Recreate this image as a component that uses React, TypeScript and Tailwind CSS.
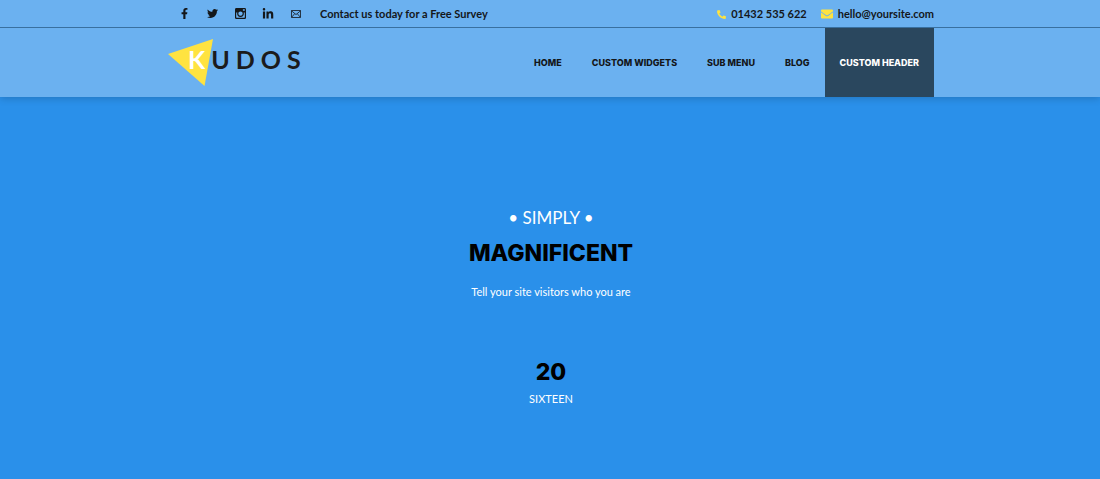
import { FaFacebookF, FaTwitter, FaLinkedinIn, FaPhone, FaEnvelope } from "react-icons/fa";

function CameraIcon() {
  return (
    <svg viewBox="0 0 12 12" className="size-[11px]" aria-hidden="true">
      <path
        fill="currentColor"
        fillRule="evenodd"
        d="M1.5 0h9A1.5 1.5 0 0 1 12 1.5v9a1.5 1.5 0 0 1-1.5 1.5h-9A1.5 1.5 0 0 1 0 10.5v-9A1.5 1.5 0 0 1 1.5 0ZM8.6 1.3v1.8h2.1V1.3ZM1.3 5v5.2q0 .5.5.5h8.4q.5 0 .5-.5V5H9.5a3.7 3.7 0 1 1-7 0ZM6 3.7a2.4 2.4 0 1 0 0 4.8a2.4 2.4 0 0 0 0-4.8Z"
      />
    </svg>
  );
}

function MailOutlineIcon() {
  return (
    <svg viewBox="0 0 10 8" className="h-2 w-[10px]" fill="none" stroke="currentColor" aria-hidden="true">
      <path d="M.5 .5h9v7h-9ZM.5 .8 5 4.6 9.5 .8M.7 7.2 3.7 3.7M9.3 7.2 6.3 3.7" strokeWidth="0.8" />
    </svg>
  );
}

const socials = [
  { label: "Facebook", icon: <FaFacebookF className="size-[11px]" /> },
  { label: "Twitter", icon: <FaTwitter className="size-[11px]" /> },
  { label: "Instagram", icon: <CameraIcon /> },
  { label: "LinkedIn", icon: <FaLinkedinIn className="size-3" /> },
  { label: "Email", icon: <MailOutlineIcon /> },
];

const menu = ["HOME", "CUSTOM WIDGETS", "SUB MENU", "BLOG"];

function Logo() {
  return (
    <a href="#" aria-label="KUDOS" className="relative ml-0.5 flex h-12 items-start pt-2 pl-5 text-[25px] leading-none font-bold text-[#1b1b1d]">
      <svg viewBox="0 0 46 48" className="absolute top-0 left-0 h-12 w-[46px]" aria-hidden="true">
        <path d="M0 15 45 0 36.5 47Z" fill="#ffe340" />
      </svg>
      <span className="relative flex gap-[6px]">
        <span className="text-white">K</span>
        <span>U</span>
        <span>D</span>
        <span>O</span>
        <span>S</span>
      </span>
    </a>
  );
}

export default function App() {
  return (
    <div className="flex min-h-screen flex-col bg-[#2a90ea] font-['Lato',sans-serif] text-[#14171a]">
      <header className="bg-[#6bb1f0] shadow-[0_1px_8px_rgba(0,0,0,0.2)]">
        <div className="border-b border-[#39709f]">
          <div className="mx-auto flex h-[27px] max-w-[768px] items-center justify-between text-[11px] font-bold">
            <div className="flex items-center">
              <ul className="flex pl-1">
                {socials.map((s) => (
                  <li key={s.label}>
                    <a href="#" aria-label={s.label} className="flex h-5 w-7 items-center justify-center">
                      {s.icon}
                    </a>
                  </li>
                ))}
              </ul>
              <p className="pt-px pl-[10px]">Contact us today for a Free Survey</p>
            </div>
            <div className="flex items-center gap-[14px] pt-px">
              <a href="tel:01432535622" className="flex items-center gap-[5px]">
                <FaPhone className="size-[9px] -scale-x-100 text-[#ffe340]" />
                01432 535 622
              </a>
              <a href="mailto:hello@yoursite.com" className="flex items-center gap-[5px]">
                <FaEnvelope className="size-3 text-[#ffe340]" />
                hello@yoursite.com
              </a>
            </div>
          </div>
        </div>
        <div className="mx-auto flex h-[69px] max-w-[768px] items-center justify-between">
          <Logo />
          <nav className="flex h-full font-['Inter',sans-serif] text-[9px] font-extrabold">
            {menu.map((item) => (
              <a key={item} href="#" className="flex items-center px-[15px]">
                {item}
              </a>
            ))}
            <a href="#" aria-current="page" className="flex items-center bg-[#2a475e] px-[15px] text-white">
              CUSTOM HEADER
            </a>
          </nav>
        </div>
      </header>
      <main className="flex flex-col items-center pt-[109px] pl-0.5 text-center text-white">
        <p className="text-[17px] leading-6">• SIMPLY •</p>
        <h1 className="mt-[11px] font-['Inter',sans-serif] text-[23px] leading-6 font-extrabold text-black">MAGNIFICENT</h1>
        <p className="mt-[19px] text-[11px] leading-4">Tell your site visitors who you are</p>
        <p className="mt-[60px] font-['Inter',sans-serif] text-[23px] leading-6 font-extrabold text-black">20</p>
        <p className="mt-[7px] text-[11px] leading-4">SIXTEEN</p>
      </main>
    </div>
  );
}
